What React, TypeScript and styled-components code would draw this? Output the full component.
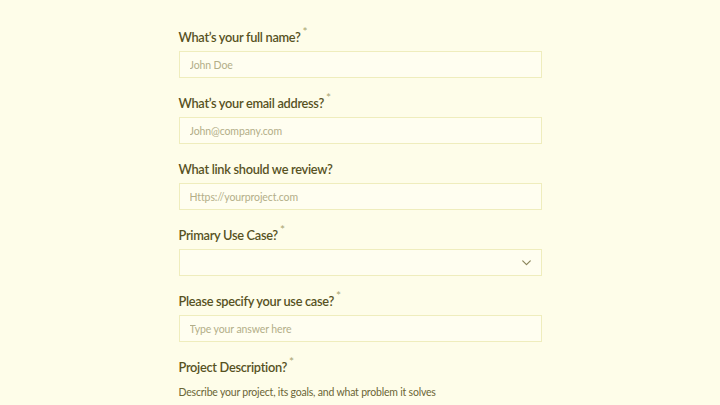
import React from 'react'
import styled, { createGlobalStyle } from 'styled-components'

const GlobalStyle = createGlobalStyle`
  html, body {
    margin: 0;
    padding: 0;
    background: #fefde9;
  }
  * {
    box-sizing: border-box;
  }
`

const Form = styled.form`
  width: 363px;
  margin: 0 auto;
  padding-top: 28px;
  display: flex;
  flex-direction: column;
  gap: 16px;
  font-family: Lato, 'Noto Sans', sans-serif;
`

const Field = styled.div`
  display: flex;
  flex-direction: column;
`

const Label = styled.label`
  display: block;
  height: 18px;
  font-size: 12.8px;
  line-height: 18px;
  font-weight: 600;
  color: #57521f;
  margin-bottom: 5px;
  letter-spacing: -0.3px;
`

const Required = styled.span`
  display: inline-block;
  vertical-align: top;
  line-height: 0;
  font-size: 12px;
  font-weight: 400;
  color: #a9a571;
  margin-left: 2px;
  transform: translateY(4px);
`

const Input = styled.input`
  height: 27px;
  width: 100%;
  border: 1px solid #efedbd;
  background: #fffef0;
  padding: 0 10px;
  font-family: inherit;
  font-size: 10.5px;
  letter-spacing: -0.1px;
  color: #57521f;
  outline: none;

  &::placeholder {
    color: #b3ae88;
  }
`

const SelectBox = styled.div`
  height: 27px;
  width: 100%;
  border: 1px solid #efedbd;
  background: #fffef0;
  display: flex;
  align-items: center;
  justify-content: flex-end;
  padding-right: 8px;
  color: #8a855a;
`

const Hint = styled.p`
  margin: 3px 0 0;
  font-size: 10.5px;
  line-height: 16px;
  letter-spacing: -0.2px;
  color: #6b6536;
`

const Chevron = () => (
  <svg width="13" height="13" viewBox="0 0 24 24" fill="none" stroke="currentColor" strokeWidth="2.2" strokeLinecap="round" strokeLinejoin="round">
    <path d="M5 9l7 7 7-7" />
  </svg>
)

const LabelText = ({ text, required }: { text: string; required?: boolean }) => (
  <Label>
    {text}
    {required && <Required>*</Required>}
  </Label>
)

export default function App() {
  return (
    <>
      <GlobalStyle />
      <Form>
        <Field>
          <LabelText text="What’s your full name?" required />
          <Input placeholder="John Doe" />
        </Field>
        <Field>
          <LabelText text="What’s your email address?" required />
          <Input placeholder="John@company.com" />
        </Field>
        <Field>
          <LabelText text="What link should we review?" />
          <Input placeholder="Https://yourproject.com" />
        </Field>
        <Field>
          <LabelText text="Primary Use Case?" required />
          <SelectBox>
            <Chevron />
          </SelectBox>
        </Field>
        <Field>
          <LabelText text="Please specify your use case?" required />
          <Input placeholder="Type your answer here" />
        </Field>
        <Field>
          <LabelText text="Project Description?" required />
          <Hint>Describe your project, its goals, and what problem it solves</Hint>
        </Field>
      </Form>
    </>
  )
}
